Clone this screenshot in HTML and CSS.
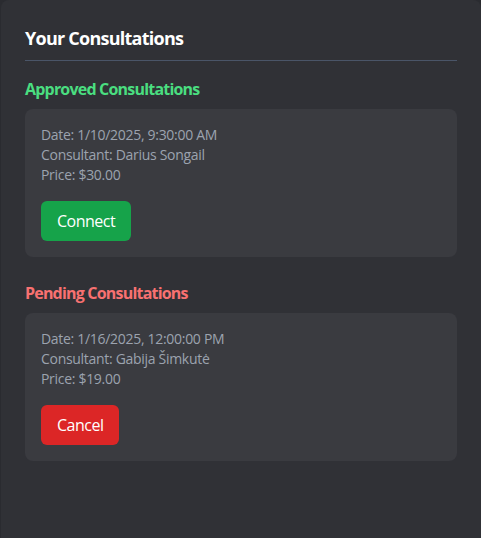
FILE: index.html
```html
<!DOCTYPE html>
<html>
<head>
<meta charset="utf-8">
<link rel="stylesheet" href="styles.css">
</head>
<body>
<div class="panel">
  <h2 class="title">Your Consultations</h2>
  <section class="group">
    <h3 class="group-title approved">Approved Consultations</h3>
    <div class="card">
      <p>Date: 1/10/2025, 9:30:00 AM</p>
      <p>Consultant: Darius Songail</p>
      <p>Price: $30.00</p>
      <button class="btn btn-green">Connect</button>
    </div>
  </section>
  <section class="group">
    <h3 class="group-title pending">Pending Consultations</h3>
    <div class="card">
      <p>Date: 1/16/2025, 12:00:00 PM</p>
      <p>Consultant: Gabija Šimkutė</p>
      <p>Price: $19.00</p>
      <button class="btn btn-red">Cancel</button>
    </div>
  </section>
</div>
</body>
</html>
```
FILE: styles.css
```css
* { box-sizing: border-box; }
html, body {
  margin: 0;
  height: 100%;
  background: #2a2b30;
  font-family: "Open Sans", "Noto Sans", sans-serif;
  overflow: hidden;
}
.panel {
  margin-left: 1px;
  min-height: 560px;
  background: #303136;
  border-radius: 8px 8px 0 0;
  padding: 24px 24px;
}
.title {
  margin: 0;
  font-size: 18px;
  line-height: 28px;
  font-weight: 700;
  letter-spacing: -0.75px;
  color: #ffffff;
  padding-bottom: 8px;
  border-bottom: 1px solid #4a5568;
}
.group { margin-top: 16px; }
.group + .group { margin-top: 24px; }
.group-title {
  margin: 0 0 8px;
  font-size: 16px;
  line-height: 24px;
  font-weight: 700;
  letter-spacing: -0.8px;
}
.approved { color: #4ade80; }
.pending { color: #f87171; }
.card {
  background: #3a3b40;
  border-radius: 8px;
  padding: 16px;
}
.card p {
  margin: 0;
  font-size: 14px;
  line-height: 20px;
  letter-spacing: -0.3px;
  color: #9ca3af;
}
.btn {
  margin-top: 16px;
  height: 40px;
  padding: 0 16px;
  border: none;
  border-radius: 6px;
  color: #ffffff;
  font-family: inherit;
  font-size: 16px;
  letter-spacing: -0.5px;
  display: block;
}
.btn-green { background: #16a34a; }
.btn-red { background: #dc2626; }
```
